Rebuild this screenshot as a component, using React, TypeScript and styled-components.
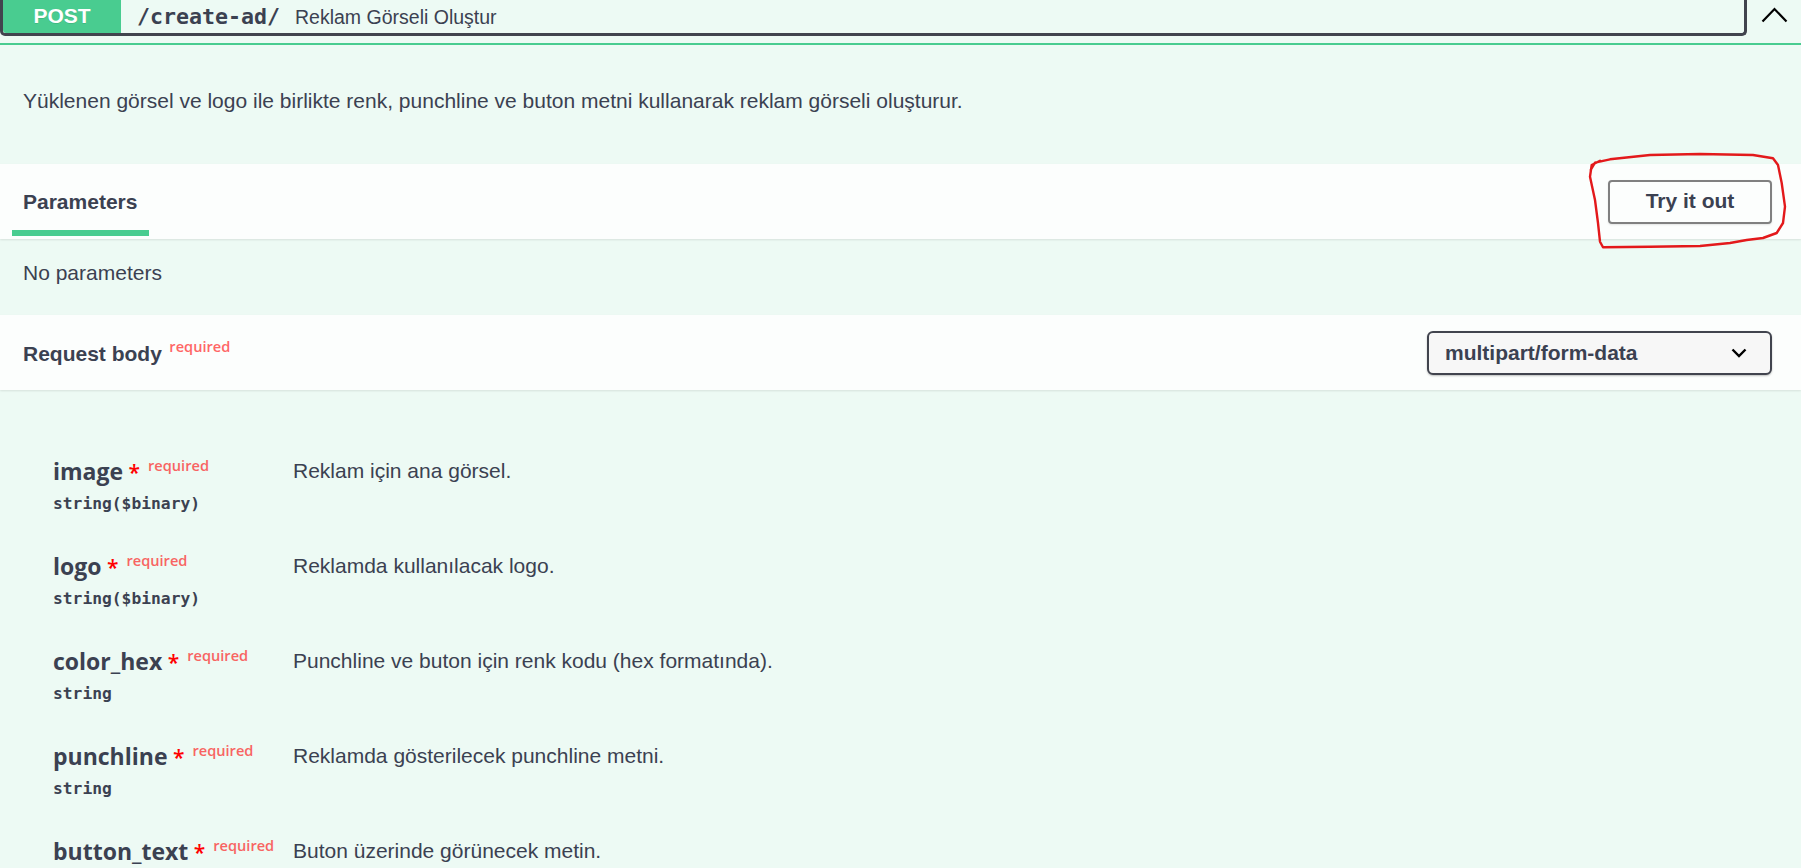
import React from "react";
import styled, { createGlobalStyle } from "styled-components";

const GlobalStyle = createGlobalStyle`
  html, body {
    margin: 0;
    padding: 0;
    overflow: hidden;
    background: #ffffff;
  }
  * { box-sizing: border-box; }
`;

const TEXT = "#3b4151";
const GREEN = "#49cc90";
const SANS = `"Liberation Sans", Arial, sans-serif`;
const OPEN = `"Open Sans", "Liberation Sans", sans-serif`;
const MONO = `"DejaVu Sans Mono", "Liberation Mono", monospace`;

const Opblock = styled.div`
  width: 1801px;
  height: 868px;
  overflow: hidden;
  background: rgb(237, 250, 244);
  font-family: ${SANS};
  color: ${TEXT};
`;

const Summary = styled.div`
  display: flex;
  padding-bottom: 7px;
  border-bottom: 2px solid ${GREEN};
`;

const SummaryControl = styled.div`
  flex: 1;
  display: flex;
  align-items: baseline;
  height: 36px;
  border: 3px solid #41444e;
  border-top: 0;
  border-radius: 0 0 5px 5px;
`;

const MethodBadge = styled.span`
  align-self: stretch;
  width: 118px;
  display: flex;
  align-items: flex-end;
  justify-content: center;
  padding-bottom: 7px;
  background: ${GREEN};
  border-radius: 0 0 0 3px;
  color: #ffffff;
  font-family: ${SANS};
  font-weight: 700;
  font-size: 21px;
  line-height: 21px;
  text-shadow: 0 1px 0 rgba(0, 0, 0, 0.1);
`;

const PathText = styled.span`
  margin: 4.5px 0 0 16px;
  font-family: ${MONO};
  font-weight: 700;
  font-size: 21.6px;
  line-height: 24px;
  color: ${TEXT};
`;

const SummaryDesc = styled.span`
  margin-left: 15px;
  font-family: ${SANS};
  font-size: 19.5px;
  line-height: 24px;
  color: ${TEXT};
`;

const ArrowButton = styled.div`
  width: 54px;
  display: flex;
  justify-content: center;
  align-items: flex-start;
  padding-top: 7px;
`;

const DescriptionBlock = styled.div`
  padding: 41px 23px 48px;
  font-size: 21px;
  line-height: 30px;
`;

const SectionHeader = styled.div`
  position: relative;
  z-index: 1;
  display: flex;
  align-items: center;
  justify-content: space-between;
  min-height: 75px;
  padding: 0 29px 0 23px;
  background: rgba(255, 255, 255, 0.8);
  box-shadow: 0 1px 2px rgba(0, 0, 0, 0.1);
`;

const Tab = styled.div<{ $active?: boolean }>`
  position: relative;
  font-size: 21px;
  font-weight: 700;
  line-height: 30px;
  &::after {
    content: "";
    display: ${(p) => (p.$active ? "block" : "none")};
    position: absolute;
    left: -10%;
    width: 120%;
    top: calc(100% + 13px);
    height: 6px;
    background: ${GREEN};
  }
`;

const TryButton = styled.button`
  width: 164px;
  height: 44px;
  border: 2px solid #808080;
  border-radius: 4px;
  background: transparent;
  box-shadow: 0 1px 2px rgba(0, 0, 0, 0.1);
  font-family: ${SANS};
  font-size: 21px;
  font-weight: 700;
  line-height: 26px;
  color: ${TEXT};
  padding: 0 0 2px;
  cursor: pointer;
`;

const Annotation = styled.svg`
  position: absolute;
  right: 11px;
  top: -14px;
  width: 205px;
  height: 102px;
  overflow: visible;
  pointer-events: none;
`;

const NoParams = styled.div`
  padding: 19px 23px 27px;
  font-size: 21px;
  line-height: 30px;
`;

const SectionTitle = styled.div`
  padding-top: 2px;
  font-size: 21px;
  font-weight: 700;
  line-height: 30px;
`;

const RequiredMark = styled.span<{ $onWhite?: boolean; $gap: number }>`
  font-family: ${OPEN};
  font-weight: 600;
  font-size: 14.6px;
  line-height: 1;
  padding-left: ${(p) => p.$gap}px;
  vertical-align: 9px;
  color: ${(p) => (p.$onWhite ? "#ff6666" : "#f86462")};
`;

const SelectBox = styled.div`
  width: 345px;
  height: 44px;
  display: flex;
  align-items: center;
  justify-content: space-between;
  padding: 0 23px 0 16px;
  border: 2px solid #41444e;
  border-radius: 6px;
  background: #f7f7f7;
  box-shadow: 0 1px 2px 0 rgba(0, 0, 0, 0.25);
  font-size: 21px;
  font-weight: 700;
  color: ${TEXT};
`;

const BodyTable = styled.div`
  padding: 66px 0 0 53px;
`;

const ParamRow = styled.div`
  display: grid;
  grid-template-columns: 240px 1fr;
  padding-bottom: 35px;
`;

const NameCell = styled.div`
  display: flex;
  flex-direction: column;
`;

const ParamName = styled.div`
  font-family: ${OPEN};
  font-weight: 700;
  font-size: 23px;
  line-height: 30px;
  white-space: nowrap;
  color: ${TEXT};
`;

const Star = styled.span`
  color: #ff0000;
  font-size: 21px;
  font-weight: 600;
  line-height: 1;
`;

const ParamType = styled.div`
  margin-top: 6px;
  font-family: ${MONO};
  font-weight: 700;
  font-size: 16.3px;
  line-height: 24px;
  color: ${TEXT};
`;

const ParamDesc = styled.div`
  font-family: ${SANS};
  font-size: 21px;
  line-height: 30px;
  color: ${TEXT};
`;

const params = [
  { name: "image", type: "string($binary)", desc: "Reklam için ana görsel." },
  { name: "logo", type: "string($binary)", desc: "Reklamda kullanılacak logo." },
  { name: "color_hex", type: "string", desc: "Punchline ve buton için renk kodu (hex formatında)." },
  { name: "punchline", type: "string", desc: "Reklamda gösterilecek punchline metni." },
  { name: "button_text", type: "", desc: "Buton üzerinde görünecek metin." },
];

const annotationPath =
  "M5.7 20 L10 12.7 L25 9.3 L65 5 L115 4 L168 5 L188 8.3 L193 15 L196.7 33 L200 56.7 L198 73 L191.7 83 L178 88 L161.7 90 L145 93 L115 96 L65 96.7 L18 97.3 L15 91.7 L13 73 L10 50 L5 26.7 L6.7 15 L15 10.7";

export default function App() {
  return (
    <>
      <GlobalStyle />
      <Opblock>
        <Summary>
          <SummaryControl>
            <MethodBadge>POST</MethodBadge>
            <PathText>/create-ad/</PathText>
            <SummaryDesc>Reklam Görseli Oluştur</SummaryDesc>
          </SummaryControl>
          <ArrowButton>
            <svg width="27" height="16" viewBox="0 0 27 16">
              <polyline
                points="1.5,14.5 13.5,2 25.5,14.5"
                fill="none"
                stroke="#000"
                strokeWidth="2.2"
              />
            </svg>
          </ArrowButton>
        </Summary>

        <DescriptionBlock>
          Yüklenen görsel ve logo ile birlikte renk, punchline ve buton metni kullanarak reklam görseli oluşturur.
        </DescriptionBlock>

        <SectionHeader>
          <Tab $active>Parameters</Tab>
          <TryButton>Try it out</TryButton>
          <Annotation viewBox="0 0 205 102">
            <path
              d={annotationPath}
              fill="none"
              stroke="#e3191b"
              strokeWidth="2.4"
              strokeLinejoin="round"
              strokeLinecap="round"
            />
          </Annotation>
        </SectionHeader>

        <NoParams>No parameters</NoParams>

        <SectionHeader>
          <SectionTitle>
            Request body<RequiredMark $onWhite $gap={7.5}>required</RequiredMark>
          </SectionTitle>
          <SelectBox>
            <span>multipart/form-data</span>
            <svg width="16" height="10" viewBox="0 0 16 10">
              <polyline
                points="1.5,1.5 8,8 14.5,1.5"
                fill="none"
                stroke="#000"
                strokeWidth="2.4"
              />
            </svg>
          </SelectBox>
        </SectionHeader>

        <BodyTable>
          {params.map((p) => (
            <ParamRow key={p.name}>
              <NameCell>
                <ParamName>
                  {p.name}
                  <Star>{"\u00a0*"}</Star>
                  <RequiredMark $gap={8}>required</RequiredMark>
                </ParamName>
                {p.type && <ParamType>{p.type}</ParamType>}
              </NameCell>
              <ParamDesc>{p.desc}</ParamDesc>
            </ParamRow>
          ))}
        </BodyTable>
      </Opblock>
    </>
  );
}
